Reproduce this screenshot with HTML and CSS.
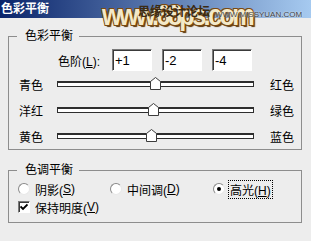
FILE: index.html
```html
<!DOCTYPE html>
<html lang="zh-CN">
<head>
    <meta charset="UTF-8">
    <title>色彩平衡</title>
    <link rel="stylesheet" href="styles.css">
</head>
<body>
    <div class="dialog">
        <div class="titlebar">色彩平衡</div>

        <div class="watermark">
            <span class="wm-big">www.68ps.com</span>
            <span class="wm-cn">思缘设计论坛</span>
            <span class="wm-url">WWW.MISSYUAN.COM</span>
        </div>

        <div class="content">
            <fieldset class="group balance">
                <legend>色彩平衡</legend>
                <div class="levels">
                    <label>色阶(<u>L</u>):</label>
                    <input type="text" value="+1">
                    <input type="text" value="-2">
                    <input type="text" value="-4">
                </div>
                <div class="slider-row">
                    <span class="side left">青色</span>
                    <div class="track">
                        <span class="thumb" style="left: 50.5%">
                            <svg width="11" height="13" viewBox="0 0 11 13"><polygon points="5.5,0.5 10.5,4.5 10.5,12.5 0.5,12.5 0.5,4.5" fill="#fff" stroke="#3c3c3c"/></svg>
                        </span>
                    </div>
                    <span class="side right">红色</span>
                </div>
                <div class="slider-row">
                    <span class="side left">洋红</span>
                    <div class="track">
                        <span class="thumb" style="left: 49%">
                            <svg width="11" height="13" viewBox="0 0 11 13"><polygon points="5.5,0.5 10.5,4.5 10.5,12.5 0.5,12.5 0.5,4.5" fill="#fff" stroke="#3c3c3c"/></svg>
                        </span>
                    </div>
                    <span class="side right">绿色</span>
                </div>
                <div class="slider-row">
                    <span class="side left">黄色</span>
                    <div class="track">
                        <span class="thumb" style="left: 48%">
                            <svg width="11" height="13" viewBox="0 0 11 13"><polygon points="5.5,0.5 10.5,4.5 10.5,12.5 0.5,12.5 0.5,4.5" fill="#fff" stroke="#3c3c3c"/></svg>
                        </span>
                    </div>
                    <span class="side right">蓝色</span>
                </div>
            </fieldset>

            <fieldset class="group tone">
                <legend>色调平衡</legend>
                <div class="radios">
                    <span class="option"><span class="radio"></span>阴影(<u>S</u>)</span>
                    <span class="option"><span class="radio"></span>中间调(<u>D</u>)</span>
                    <span class="option"><span class="radio checked"></span><span class="focus">高光(<u>H</u>)</span></span>
                </div>
                <div class="check-row">
                    <span class="checkbox">
                        <svg width="8" height="8" viewBox="0 0 8 8"><path d="M0.5 3.5 L3 6 L7.5 1.5" fill="none" stroke="#000" stroke-width="1.8"/></svg>
                    </span>
                    保持明度(<u>V</u>)
                </div>
            </fieldset>
        </div>
    </div>
</body>
</html>
```

FILE: styles.css
```css
body {
    margin: 0;
    background: #ededed;
    font-family: "Liberation Sans", "Noto Sans CJK SC", sans-serif;
    font-size: 12px;
    color: #000;
}

.dialog {
    position: relative;
    width: 311px;
    height: 241px;
    overflow: hidden;
    background: #ededed;
}

.titlebar {
    height: 18px;
    line-height: 18px;
    padding-left: 1px;
    background: linear-gradient(to right, #0a246a, #a6caf0);
    color: #fff;
    font-weight: bold;
    font-size: 12px;
}

/* watermark stamped over the screenshot */
.watermark {
    position: absolute;
    top: 0;
    left: 0;
    width: 311px;
    height: 32px;
}

.wm-big {
    position: absolute;
    left: 102px;
    top: 0;
    font-family: "Liberation Sans", sans-serif;
    font-size: 29px;
    line-height: 30px;
    font-weight: bold;
    letter-spacing: -3px;
    transform: scaleX(0.87);
    transform-origin: left center;
    color: #f4e9c8;
    text-shadow: 1px 1px 0 #7a4a12, -1px -1px 0 #7a4a12, 1px -1px 0 #7a4a12, -1px 1px 0 #7a4a12, 2px 2px 1px #5a3508;
}

.wm-cn {
    position: absolute;
    left: 138px;
    top: 4px;
    font-size: 12px;
    line-height: 16px;
    font-weight: bold;
    color: #3a2a14;
}

.wm-url {
    position: absolute;
    left: 215px;
    top: 10px;
    font-size: 8px;
    line-height: 10px;
    color: #444;
    text-shadow: 0 0 2px #fff;
}

.content {
    padding: 10px 9px 0 8px;
}

.group {
    margin: 0;
    padding: 0;
    border: 1px solid #8d8d8d;
    min-width: 0;
}

.group legend {
    margin-left: 8px;
    padding: 0 6px 0 8px;
    line-height: 16px;
    font-size: 12px;
}

.levels {
    display: flex;
    align-items: center;
    height: 22px;
    margin-top: 5px;
    padding-left: 49px;
}

.levels label {
    width: 54px;
}

.levels input {
    box-sizing: border-box;
    width: 40px;
    height: 22px;
    margin: 0 10px 0 0;
    padding: 0 2px;
    border: 1px solid;
    border-color: #7a7a7a #fff #fff #7a7a7a;
    box-shadow: inset 1px 1px 0 #3a3a3a;
    background: #fff;
    font-family: "Liberation Sans", sans-serif;
    font-size: 13px;
    color: #000;
    outline: none;
}

.slider-row {
    display: flex;
    align-items: center;
    height: 26px;
}

.slider-row:first-of-type {
    margin-top: 6px;
}

.side.left {
    width: 38px;
    margin-left: 10px;
}

.side.right {
    margin-left: 16px;
}

.track {
    position: relative;
    box-sizing: border-box;
    width: 197px;
    height: 6px;
    border: 1px solid #2e2e2e;
    border-top-width: 2px;
    background: #fff;
}

.thumb {
    position: absolute;
    top: -6px;
    margin-left: -6px;
    width: 11px;
    height: 13px;
}

.thumb svg {
    display: block;
}

.tone {
    margin-top: 12px;
    padding-bottom: 6px;
}

.radios {
    display: grid;
    grid-template-columns: 92px 103px auto;
    align-items: center;
    height: 18px;
    margin-top: 2px;
    padding-left: 9px;
}

.option {
    display: flex;
    align-items: center;
}

.radio {
    box-sizing: border-box;
    width: 12px;
    height: 12px;
    margin-right: 5px;
    border-radius: 50%;
    border: 1px solid;
    border-color: #8a8a8a #e8e8e8 #e8e8e8 #8a8a8a;
    background: #fff;
    display: flex;
    align-items: center;
    justify-content: center;
}

.radio.checked::after {
    content: "";
    width: 4px;
    height: 4px;
    border-radius: 50%;
    background: #000;
}

.focus {
    outline: 1px dotted #000;
    outline-offset: 0;
    padding: 0 1px;
    margin-left: -1px;
}

.check-row {
    display: flex;
    align-items: center;
    height: 18px;
    padding-left: 9px;
}

.checkbox {
    box-sizing: border-box;
    width: 12px;
    height: 12px;
    margin-right: 5px;
    border: 1px solid;
    border-color: #7a7a7a #fff #fff #7a7a7a;
    box-shadow: inset 1px 1px 0 #3a3a3a;
    background: #fff;
    display: flex;
    align-items: center;
    justify-content: center;
}

.checkbox svg {
    display: block;
}
```
